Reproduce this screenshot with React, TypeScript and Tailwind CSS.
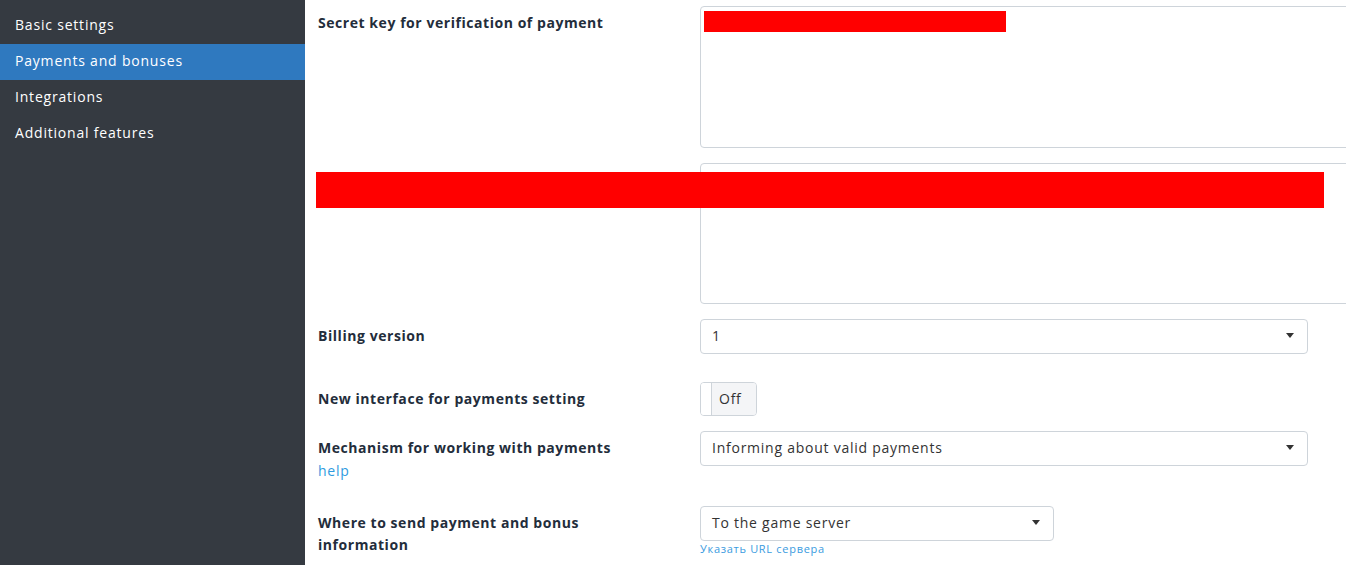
import React from 'react'

const font = { fontFamily: '"Open Sans", "Noto Sans", Arial, sans-serif' }

const menu = ['Basic settings', 'Payments and bonuses', 'Integrations', 'Additional features']

function Caret() {
  return (
    <svg width="8" height="5" viewBox="0 0 8 5" className="shrink-0">
      <path d="M0 0h8L4 5z" fill="#333" />
    </svg>
  )
}

function Select({ value, width }: { value: string; width: string }) {
  return (
    <div
      className={`${width} h-[35px] flex items-center justify-between pl-[11px] pr-[13px] pb-[2px] border border-[#ced4da] rounded-[4px] bg-white text-[14px] tracking-[0.75px] text-[#333]`}
    >
      <span>{value}</span>
      <Caret />
    </div>
  )
}

function Label({ children }: { children: React.ReactNode }) {
  return (
    <div className="pt-[6px] text-[14px] leading-[22px] font-bold tracking-[0.55px] text-[#232d3b]">{children}</div>
  )
}

export default function App() {
  return (
    <div className="w-[1346px] h-[565px] overflow-hidden flex bg-white" style={font}>
      {/* Sidebar */}
      <aside className="w-[305px] shrink-0 h-full bg-[#353a41] pt-[8px]">
        {menu.map((item) => (
          <div
            key={item}
            className={`h-[36px] flex items-center px-[15px] pb-[4px] text-[14px] tracking-[0.8px] text-white ${
              item === 'Payments and bonuses' ? 'bg-[#2f79bf]' : ''
            }`}
          >
            {item}
          </div>
        ))}
      </aside>

      {/* Settings form */}
      <main className="relative flex-1 min-w-0 pl-[13px] flex flex-col">
        <div className="mt-[6px] grid grid-cols-[382px_1fr]">
          <Label>Secret key for verification of payment</Label>
          <div className="relative w-[700px] h-[142px] border border-[#ced4da] rounded-[4px]">
            <div className="absolute left-[3px] top-[4px] w-[302px] h-[21px] bg-[#ff0000]" />
          </div>
        </div>

        <div className="mt-[15px] grid grid-cols-[382px_1fr]">
          <Label>&nbsp;</Label>
          <div className="w-[700px] h-[141px] border border-[#ced4da] rounded-[4px]" />
        </div>

        <div className="mt-[15px] grid grid-cols-[382px_1fr]">
          <Label>Billing version</Label>
          <Select value="1" width="w-[608px]" />
        </div>

        <div className="mt-[28px] grid grid-cols-[382px_1fr]">
          <Label>New interface for payments setting</Label>
          <div className="w-[57px] h-[34px] flex border border-[#ced4da] rounded-[4px] overflow-hidden">
            <div className="w-[11px] bg-white border-r border-[#ced4da]" />
            <div className="flex-1 flex items-center pl-[7px] pb-[2px] bg-[#f4f5f7] text-[14px] tracking-[0.75px] text-[#333]">
              Off
            </div>
          </div>
        </div>

        <div className="mt-[15px] grid grid-cols-[382px_1fr]">
          <div>
            <Label>Mechanism for working with payments</Label>
            <a className="block mt-[1px] text-[14px] leading-[22px] tracking-[0.75px] text-[#2f9be0]">help</a>
          </div>
          <Select value="Informing about valid payments" width="w-[608px]" />
        </div>

        <div className="mt-[24px] grid grid-cols-[382px_1fr]">
          <Label>
            Where to send payment and bonus
            <br />
            information
          </Label>
          <div>
            <Select value="To the game server" width="w-[354px]" />
            <a className="block mt-[1px] text-[11px] leading-[14px] tracking-[0.7px] text-[#3a9be0]">
              Указать URL сервера
            </a>
          </div>
        </div>

        {/* redaction overlay */}
        <div className="absolute left-[11px] top-[172px] w-[1008px] h-[36px] bg-[#ff0000]" />
      </main>
    </div>
  )
}
